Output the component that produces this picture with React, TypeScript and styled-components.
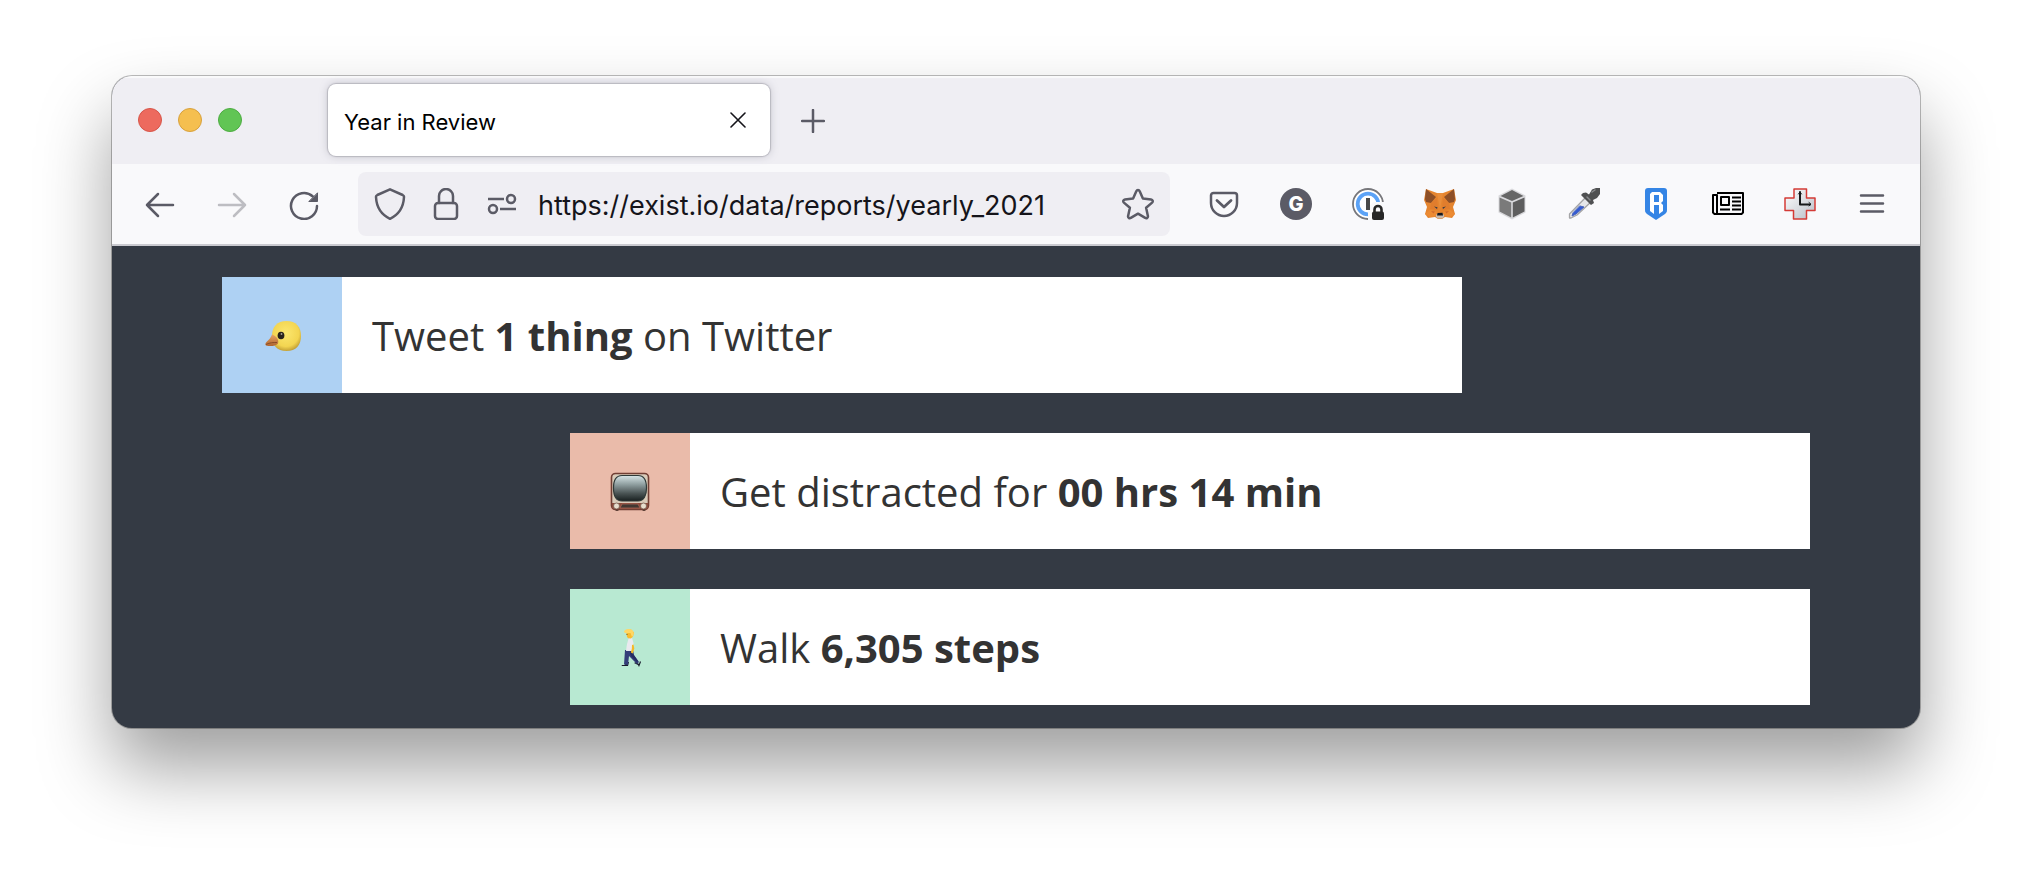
import React from 'react';
import styled, { createGlobalStyle } from 'styled-components';

const GlobalStyle = createGlobalStyle`
  *, *::before, *::after { box-sizing: border-box; }
  body { margin: 0; background: #fff; }
  button { border: 0; padding: 0; background: none; color: inherit; font: inherit; cursor: pointer; }
`;

const Desktop = styled.div`
  padding: 76px 112px 148px;
`;

const BrowserWindow = styled.div`
  overflow: hidden;
  border-radius: 20px;
  background: #343a44;
  font-family: Inter, 'Liberation Sans', sans-serif;
  box-shadow: 0 0 0 1px rgba(0, 0, 0, 0.26), 0 40px 72px rgba(0, 0, 0, 0.38);
`;

const TabStrip = styled.header`
  display: flex;
  align-items: center;
  height: 88px;
  padding-left: 26px;
  background: #efeef3;
  box-shadow: inset 0 2px 1px #fafafb;
`;

const WindowControls = styled.div`
  display: flex;
  gap: 16px;
  margin-right: 86px;
`;

const Light = styled.button<{ $fill: string; $edge: string }>`
  width: 24px;
  height: 24px;
  border: 1px solid ${(p) => p.$edge};
  border-radius: 50%;
  background: ${(p) => p.$fill};
`;

const Tab = styled.div`
  display: flex;
  align-items: center;
  justify-content: space-between;
  width: 442px;
  height: 72px;
  padding: 0 12px 0 16px;
  border-radius: 8px;
  background: #fff;
  box-shadow: 0 0 1px 1px #b9b8c0, 0 0 8px rgba(128, 128, 142, 0.4);
`;

const TabTitle = styled.span`
  padding-top: 4px;
  font-size: 22px;
  line-height: 28px;
  color: #000;
`;

const SquareButton = styled.button<{ $size: number }>`
  display: grid;
  place-items: center;
  flex: none;
  width: ${(p) => p.$size}px;
  height: ${(p) => p.$size}px;
  color: #5b5b66;
`;

const CloseButton = styled(SquareButton)`
  color: #15141a;
`;

const NewTabButton = styled(SquareButton)`
  margin-left: 11px;
  padding-top: 2px;
`;

const Toolbar = styled.nav`
  display: flex;
  align-items: center;
  height: 82px;
  padding: 0 12px;
  border-bottom: 2px solid #cacad0;
  background: #f9f9fb;
`;

const ToolButton = styled.button`
  display: grid;
  place-items: center;
  flex: none;
  width: 72px;
  height: 64px;
  color: #5b5b66;

  &:disabled { color: #bdbdc2; }
`;

const AddressBar = styled.div`
  display: flex;
  flex: 1;
  align-items: center;
  min-width: 0;
  height: 64px;
  margin: 0 18px;
  padding: 0 4px;
  border-radius: 8px;
  background: #efeef3;
`;

const AddressInput = styled.input`
  flex: 1;
  min-width: 0;
  height: 56px;
  padding: 2px 8px 0;
  border: 0;
  outline: 0;
  background: none;
  font-family: inherit;
  font-size: 27px;
  color: #15141a;
`;

const Page = styled.main`
  display: flex;
  flex-direction: column;
  gap: 40px;
  padding: 31px 110px 23px;
`;

const Card = styled.article<{ $end?: boolean }>`
  display: flex;
  align-self: ${(p) => (p.$end ? 'flex-end' : 'flex-start')};
  width: 1240px;
  max-width: 100%;
  min-height: 116px;
  background: #fff;
`;

const CardIcon = styled.div<{ $tone: string }>`
  display: grid;
  place-items: center;
  flex: none;
  width: 120px;
  padding-top: 1px;
  background: ${(p) => p.$tone};
`;

const CardText = styled.p`
  align-self: center;
  margin: 0;
  padding: 2px 30px 0;
  font-family: 'Open Sans', 'Noto Sans', sans-serif;
  font-size: 40px;
  line-height: 56px;
  color: #333;
`;

type IconProps = { children: React.ReactNode; size?: number };

const Icon = ({ children, size = 32 }: IconProps) => (
  <svg width={size} height={size} viewBox={`0 0 ${size} ${size}`} fill="none" stroke="currentColor" strokeWidth="2.5" strokeLinecap="round" strokeLinejoin="round" aria-hidden="true">
    {children}
  </svg>
);

const Back = () => <Icon><path d="M29 17H3M14 6 3 17l11 11" /></Icon>;
const Forward = () => <Icon><path d="M3 17h26M18 6l11 11-11 11" /></Icon>;
const Reload = () => (
  <Icon>
    <path d="M29 18A13 13 0 1 1 24.600 8.200" />
    <path d="M29.500 5.200v8.300h-8.300z" fill="currentColor" stroke="currentColor" strokeWidth="1" />
  </Icon>
);
const Shield = () => <Icon><path d="M16 1.300 28.700 7c1 .5 1.400 1 1.300 2C29.500 19 26 26 16 30.800 6 26 2.500 19 2 9c-.1-1 .3-1.500 1.300-2z" /></Icon>;
const Lock = () => <Icon><path d="M9 15V8a7 7 0 0 1 14 0v7" /><rect x="5" y="15" width="22" height="16" rx="3" /></Icon>;
const Permissions = () => (
  <Icon><path d="M2 11h16M14 21h16" strokeLinecap="butt" /><circle cx="25" cy="11" r="4" /><circle cx="7" cy="21" r="4" /></Icon>
);
const Star = () => (
  <Icon><path d="M14.300 3.200c.7-1.500 2.700-1.500 3.400 0l3.200 7.300 8.200.9c1.600.2 2.200 2.100 1 3.200l-6 5.200 1.800 8.200c.3 1.600-1.300 2.700-2.700 1.900L16 25.700l-7.200 4.200c-1.400.8-3-.3-2.700-1.900l1.800-8.200-6-5.200c-1.200-1.100-.6-3 1-3.200l8.200-.9z" /></Icon>
);
const Pocket = () => <Icon><path d="M5.500 5h21A2.500 2.500 0 0 1 29 7.500V15a13 13 0 0 1-26 0V7.500A2.500 2.500 0 0 1 5.500 5z" /><path d="m9 12.500 7 6.500 7-6.500" strokeWidth="2.800" /></Icon>;
const LetterBadge = () => (
  <Icon>
    <circle cx="16" cy="16" r="16" fill="#5b5b66" stroke="none" />
    <text x="16" y="23" textAnchor="middle" fontSize="20" fontWeight="800" fontFamily="Inter, sans-serif" fill="#fff" stroke="none">G</text>
  </Icon>
);
const PasswordManager = () => (
  <Icon>
    <circle cx="16" cy="16" r="15" stroke="#77777b" strokeWidth="1.800" fill="#fff" />
    <circle cx="16" cy="16" r="10.300" stroke="#5ba2f6" strokeWidth="3.800" />
    <path d="M16 32V20l5-6h11v18z" fill="#f9f9fb" stroke="none" />
    <path d="M16 10v12" stroke="#494949" strokeWidth="4" strokeLinecap="butt" />
    <path d="M22.500 24v-2.500a3.500 3.500 0 0 1 7 0V24" stroke="#262626" strokeWidth="2.600" />
    <rect x="20" y="23.500" width="12" height="8.500" rx="2" fill="#262626" stroke="none" />
  </Icon>
);
const Fox = () => (
  <Icon>
    <g stroke="none">
      <path d="m2 1 11 4h6l11-4 2 11-3 7 2 7-3 4-7-1-3 2h-4l-3-2-7 1-3-4 2-7-3-7z" fill="#e5852f" />
      <path d="m2 1 10 8-5 6-5-1-1-3zM30 1 20 9l5 6 5-1 1-3z" fill="#8d4f27" />
      <path d="m13 5 3 16 3-16z" fill="#e98e3b" />
      <path d="m7 15 6-5 1 12-8-1zM25 15l-6-5-1 12 8-1z" fill="#e07d2d" />
      <path d="m1 26 5-4 7 2-1 4-6 1zM31 26l-5-4-7 2 1 4 6 1z" fill="#ec8b33" />
      <path d="m10 18.500 3.500.8-.5 1.700zM22 18.500l-3.500.8.5 1.700z" fill="#3b3c43" />
      <path d="m7 23 4 .5-1.500 2zM25 23l-4 .5 1.500 2z" fill="#d06a2e" />
      <path d="m12 27 2-2h4l2 2v2l-2 1.500h-4L12 29z" fill="#c9b9ab" />
      <path d="m13.500 25 5-.2.5 2.700h-6z" fill="#17191e" />
    </g>
  </Icon>
);
const Cube = () => (
  <Icon>
    <g stroke="none">
      <path d="m16 .500 13.500 7v17L16 31.500l-13.500-7v-17z" fill="#d9d9dc" />
      <path d="m16 2 11.500 6L16 13 4.500 8z" fill="#666" />
      <path d="m3.500 9.500 11.700 5v15L3.500 23.500z" fill="#7a7a7a" />
      <path d="m28.500 9.500-11.700 5v15l11.700-6z" fill="#5e5e5e" />
    </g>
  </Icon>
);
const Dropper = () => (
  <Icon>
    <path d="m18 9 5 5L9 27l-6 3H1.500v-4z" fill="#e5e6e9" stroke="#a4a4a6" strokeWidth="1.300" />
    <path d="m12 18 4 1-8 7-4 2 1-3z" fill="#345bd2" stroke="#4a66bd" strokeWidth="1" />
    <path d="m15 5 3-.500 3 2 3-5 4-1.500h4v6l-3 4-4 2 1 3-3 2-10-10z" fill="#505152" stroke="none" />
    <path d="m24 4 3-2M19 9l3 3" stroke="#888a8c" strokeWidth="1.500" />
  </Icon>
);
const Ronin = () => (
  <Icon>
    <path d="M8 0h16a3 3 0 0 1 3 3v19c0 2-1 3-2 4l-9 6-9-6c-1-1-2-2-2-4V3a3 3 0 0 1 3-3z" fill="#3585e5" stroke="none" />
    <path fillRule="evenodd" d="M12 4h8l3 3v6l-2 2 2 2v6l-4 3v-9h-5v9l-4-3V6zm2 3v7h5V7z" fill="#fff" stroke="none" />
  </Icon>
);
const Newspaper = () => (
  <Icon>
    <g stroke="#000" strokeWidth="2" strokeLinecap="butt">
      <path d="M5 5h26v19.500L29.500 26h-27L1 24.500V7h4v18" />
      <rect x="9" y="9" width="8" height="8" />
      <path d="M20 9.500h9M20 13.500h9M20 17.500h9M8 21.500h10M20 21.500h9" />
    </g>
  </Icon>
);
const ClockCross = () => (
  <Icon>
    <defs><linearGradient id="steel" x2="1" y2="1"><stop stopColor="#fff" /><stop offset="1" stopColor="#b8bec7" /></linearGradient></defs>
    <path d="M10 1h12.500v9H31v12.500h-8.500V31H9.500v-8.500H1V10h9z" fill="url(#steel)" stroke="#d43b36" strokeWidth="1.500" />
    <path d="M16 4v12.500h10" stroke="#16181a" strokeWidth="2" />
    <path d="m14.500 6 1.500-2 1.500 2M25 14.500l2 1.700-2 1.600" stroke="#16181a" strokeWidth="1" />
  </Icon>
);
const Menu = () => <Icon><path d="M5 7.500h22M5 15.500h22M5 23.500h22" /></Icon>;

const Chick = () => (
  <svg width="40" height="40" viewBox="0 0 40 40" role="img" aria-label="Bird">
    <defs>
      <radialGradient id="down" cx=".48" cy=".4" r=".64"><stop stopColor="#fbe76f" /><stop offset=".7" stopColor="#f3d551" /><stop offset="1" stopColor="#b8942f" /></radialGradient>
      <linearGradient id="beak" x2="0" y2="1"><stop stopColor="#e7a563" /><stop offset="1" stopColor="#b0652f" /></linearGradient>
    </defs>
    <path d="M24.500 5C34 5 39 11 39 20s-5 15-14.500 15C15 35 10 29 10 20S15 5 24.500 5z" fill="url(#down)" />
    <path d="M10 18.500c5 2 7 5 6 9-3 3-8 3-12 2-1-1-1-2 1-4 2-2 4-4 5-7z" fill="url(#beak)" />
    <path d="M4 28.500c4-2 7-2 11-2" stroke="#8a4c25" strokeWidth="1" fill="none" />
    <ellipse cx="19" cy="19.500" rx="3.400" ry="3.800" fill="#29231c" />
    <circle cx="19.500" cy="18" r=".9" fill="#a8a095" />
  </svg>
);

const Television = () => (
  <svg width="40" height="40" viewBox="0 0 40 40" role="img" aria-label="Television">
    <defs><linearGradient id="screen" x2="0" y2="1"><stop stopColor="#d8e6e8" /><stop offset=".35" stopColor="#8f9fa0" /><stop offset=".7" stopColor="#4a5454" /><stop offset="1" stopColor="#182020" /></linearGradient></defs>
    <path d="M4 36h5v2q-2 2-4 0zM31 36h5v2q-2 2-4 0z" fill="#49352c" />
    <rect x="1.500" y="1.500" width="37" height="36" rx="4" fill="#d9cbb9" stroke="#713f34" strokeWidth="1.600" />
    <path d="M2 31h36v4q0 2-2 2H4q-2 0-2-2z" fill="#8c4a3b" />
    <path d="M12 32h16l2 4H10z" fill="#413832" stroke="#a66653" strokeWidth=".8" />
    <path d="M12 3.500h16c6 0 8.500 5 8.500 12.500S34 29 28 29H12C6 29 3.500 24 3.500 16S6 3.500 12 3.500z" fill="url(#screen)" stroke="#303b39" strokeWidth="1.200" />
    <circle cx="6.500" cy="34" r="3" fill="#e8dece" stroke="#6c5346" strokeWidth=".7" />
    <circle cx="33.500" cy="34" r="3" fill="#e8dece" stroke="#6c5346" strokeWidth=".7" />
  </svg>
);

const Walker = () => (
  <svg width="40" height="40" viewBox="0 0 40 40" role="img" aria-label="Person walking">
    <path d="m16 34-1 3h-3q-1 1 0 1h6l1-4zM26 34l3 2 1-3 1 1-2 5-1-2-4-2z" fill="#171a2b" />
    <path d="M15 22h8l1 5 5 7-2 2-6-6-2-2-1 9-4-.500z" fill="#343d79" />
    <path d="m20 25 1-2 2 3 5 7-1 1-6-6z" fill="#252d62" />
    <path d="m19 9 3 1 1.500 5-.5 8h-7l1-7z" fill="#e9e9ef" />
    <path d="m22 17 1.500-.500.800 4-1.500 5-2-1 1-3.500z" fill="#f5b928" />
    <path d="m16 2 5-.500 3 3-1 4-2 2-3-.200-1-1.500z" fill="#f8bc2f" />
    <path d="M14 4c0-4 9-4 9.500 0 .5 3-.5 4-1.500 5l-1.500-4H15z" fill="#ffd765" />
    <circle cx="17" cy="6.500" r=".600" fill="#6b461e" />
  </svg>
);

const extensions = [
  { label: 'Save to Pocket', Glyph: Pocket },
  { label: 'Grammar checker', Glyph: LetterBadge },
  { label: 'Password manager', Glyph: PasswordManager },
  { label: 'Fox wallet', Glyph: Fox },
  { label: 'Cube', Glyph: Cube },
  { label: 'Colour picker', Glyph: Dropper },
  { label: 'Ronin wallet', Glyph: Ronin },
  { label: 'Reader', Glyph: Newspaper },
  { label: 'Time tracker', Glyph: ClockCross },
  { label: 'Application menu', Glyph: Menu },
];

export default function App() {
  return (
    <>
      <GlobalStyle />
      <Desktop>
        <BrowserWindow>
          <TabStrip>
            <WindowControls>
              <Light aria-label="Close window" $fill="#ed6a5e" $edge="#d75549" />
              <Light aria-label="Minimise window" $fill="#f5bf4f" $edge="#d8a13d" />
              <Light aria-label="Zoom window" $fill="#61c554" $edge="#4dac41" />
            </WindowControls>
            <Tab>
              <TabTitle>Year in Review</TabTitle>
              <CloseButton $size={40} aria-label="Close tab">
                <Icon size={16}><path d="m1 1 14 14M15 1 1 15" strokeWidth="1.600" /></Icon>
              </CloseButton>
            </Tab>
            <NewTabButton $size={64} aria-label="New tab">
              <Icon size={24}><path d="M12 1v22M1 12h22" /></Icon>
            </NewTabButton>
          </TabStrip>
          <Toolbar>
            <ToolButton aria-label="Back"><Back /></ToolButton>
            <ToolButton aria-label="Forward" disabled><Forward /></ToolButton>
            <ToolButton aria-label="Reload"><Reload /></ToolButton>
            <AddressBar>
              <SquareButton $size={56} aria-label="Tracking protection"><Shield /></SquareButton>
              <SquareButton $size={56} aria-label="Connection security"><Lock /></SquareButton>
              <SquareButton $size={56} aria-label="Permissions"><Permissions /></SquareButton>
              <AddressInput aria-label="Address" defaultValue="https://exist.io/data/reports/yearly_2021" />
              <SquareButton $size={56} aria-label="Bookmark this page"><Star /></SquareButton>
            </AddressBar>
            {extensions.map(({ label, Glyph }) => (
              <ToolButton key={label} aria-label={label}><Glyph /></ToolButton>
            ))}
          </Toolbar>
          <Page>
            <Card>
              <CardIcon $tone="#aed1f3"><Chick /></CardIcon>
              <CardText>Tweet <strong>1 thing</strong> on Twitter</CardText>
            </Card>
            <Card $end>
              <CardIcon $tone="#eabbaa"><Television /></CardIcon>
              <CardText>Get distracted for <strong>00 hrs 14 min</strong></CardText>
            </Card>
            <Card $end>
              <CardIcon $tone="#b8e9d2"><Walker /></CardIcon>
              <CardText>Walk <strong>6,305 steps</strong></CardText>
            </Card>
          </Page>
        </BrowserWindow>
      </Desktop>
    </>
  );
}
